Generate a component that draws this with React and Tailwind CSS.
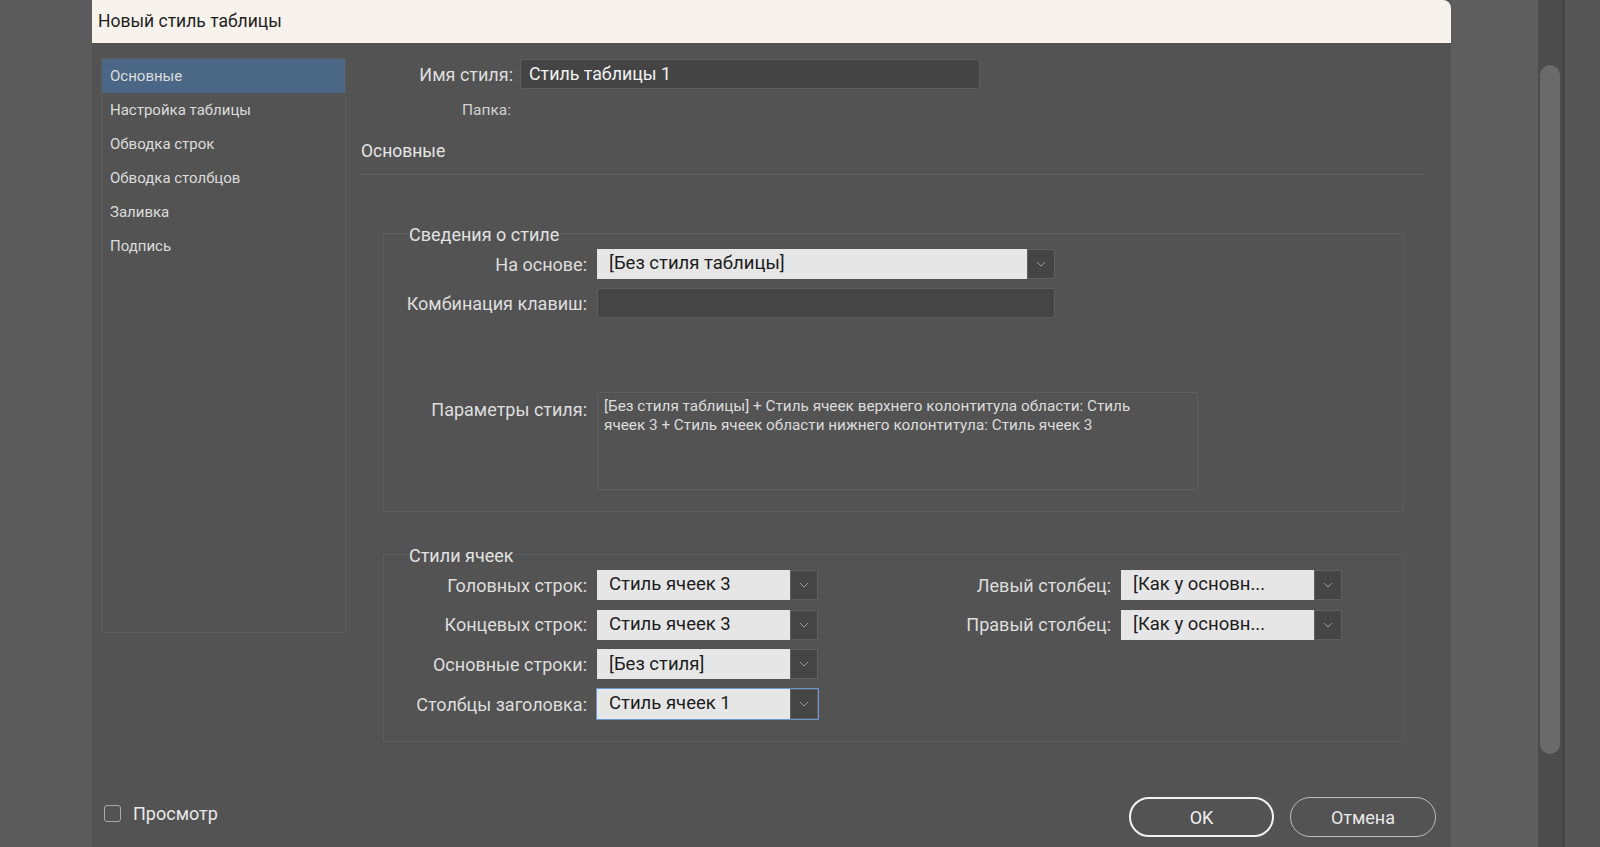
import React from "react";

const navItems = [
  "Основные",
  "Настройка таблицы",
  "Обводка строк",
  "Обводка столбцов",
  "Заливка",
  "Подпись",
];

const Chevron = () => (
  <svg width="10" height="6" viewBox="0 0 10 6" fill="none">
    <path d="M1 1l4 4 4-4" stroke="#9c9c9c" strokeWidth="1" />
  </svg>
);

// dropdown with a light value box and a dark arrow button
const Select = ({ value, className = "", focused = false }) => (
  <div
    className={`flex h-[30px] ${className} ${
      focused ? "outline outline-1 outline-[#6a98d4]" : ""
    }`}
  >
    <div className="flex-1 flex items-center pl-[12px] bg-[#e6e6e6] text-[#1c1c1c] text-[18.5px] whitespace-nowrap overflow-hidden">
      {value}
    </div>
    <div className="w-[28px] flex items-center justify-center bg-[#454545] border border-[#5f5f5f]">
      <Chevron />
    </div>
  </div>
);

const Label = ({ children, className = "" }) => (
  <div className={`text-right text-[18px] text-[#dedede] whitespace-nowrap ${className}`}>
    {children}
  </div>
);

const cellRows = [
  ["Головных строк:", "Стиль ячеек 3"],
  ["Концевых строк:", "Стиль ячеек 3"],
  ["Основные строки:", "[Без стиля]"],
  ["Столбцы заголовка:", "Стиль ячеек 1"],
];

export default function App() {
  return (
    <div className="w-[1600px] h-[847px] flex bg-[#5b5b5b] overflow-hidden font-['Roboto',sans-serif]">
      <div className="w-[92px] shrink-0" />

      {/* dialog */}
      <div className="w-[1359px] shrink-0 flex flex-col bg-[#535353]">
        <div className="h-[43px] shrink-0 flex items-center pl-[6px] bg-[#f8f2ec] rounded-tr-[8px] text-[17.5px] text-[#1e1e1e]">
          Новый стиль таблицы
        </div>

        <div className="flex pt-[15px]">
          {/* sections list */}
          <div className="ml-[9px] w-[245px] h-[575px] shrink-0 border border-[#5d5d5d]">
            {navItems.map((item, i) => (
              <div
                key={item}
                className={`h-[34px] flex items-center pl-[8px] text-[15px] text-[#dcdcdc] ${
                  i === 0 ? "bg-[#4a6886]" : ""
                }`}
              >
                {item}
              </div>
            ))}
          </div>

          {/* settings */}
          <div className="ml-[11px] flex-1 flex flex-col">
            <div className="flex items-center h-[30px] mt-[1px]">
              <Label className="w-[156px]">Имя стиля:</Label>
              <div className="ml-[7px] w-[460px] h-[30px] flex items-center pl-[8px] bg-[#444444] border border-[#5e5e5e] rounded-[3px] text-[17.8px] text-[#f2f2f2]">
                Стиль таблицы 1
              </div>
            </div>
            <div className="flex items-center h-[20px] mt-[12px]">
              <div className="w-[154px] text-right text-[15.5px] text-[#d2d2d2]">Папка:</div>
            </div>
            <div className="mt-[18px] pl-[4px] h-[24px] flex items-center text-[17.5px] text-[#e6e6e6]">
              Основные
            </div>
            <div className="mt-[11px] w-[1071px] h-px bg-[#5c5c5c]" />

            {/* style info group */}
            <div className="relative mt-[58px] ml-[26px] w-[1021px] h-[279px] border border-[#5c5c5c] pt-[15px]">
              <span className="absolute left-[24px] -top-[13px] px-[1px] bg-[#535353] text-[18px] text-[#e2e2e2]">
                Сведения о стиле
              </span>
              <div className="flex items-center">
                <Label className="w-[203px]">На основе:</Label>
                <Select value="[Без стиля таблицы]" className="ml-[10px] w-[458px]" />
              </div>
              <div className="flex items-center mt-[9px]">
                <Label className="w-[203px]">Комбинация клавиш:</Label>
                <div className="ml-[10px] w-[458px] h-[30px] bg-[#454545] border border-[#5e5e5e] rounded-[2px]" />
              </div>
              <div className="flex mt-[74px]">
                <Label className="w-[203px] pt-[4px]">Параметры стиля:</Label>
                <div className="ml-[10px] w-[601px] h-[98px] px-[6px] pt-[4px] border border-[#5e5e5e] text-[15.3px] leading-[19px] text-[#dcdcdc]">
                  [Без стиля таблицы] + Стиль ячеек верхнего колонтитула области: Стиль
                  <br />
                  ячеек 3 + Стиль ячеек области нижнего колонтитула: Стиль ячеек 3
                </div>
              </div>
            </div>

            {/* cell styles group */}
            <div className="relative mt-[42px] ml-[26px] w-[1021px] h-[188px] border border-[#5c5c5c] pt-[15px]">
              <span className="absolute left-[24px] -top-[13px] px-[1px] bg-[#535353] text-[18px] text-[#e2e2e2]">
                Стили ячеек
              </span>
              <div className="flex">
                <div className="flex flex-col gap-[9.7px]">
                  {cellRows.map(([label, value], i) => (
                    <div key={label} className="flex items-center">
                      <Label className="w-[203px]">{label}</Label>
                      <Select
                        value={value}
                        className="ml-[10px] w-[221px]"
                        focused={i === 3}
                      />
                    </div>
                  ))}
                </div>
                <div className="flex flex-col gap-[9.7px]">
                  <div className="flex items-center">
                    <Label className="w-[293px]">Левый столбец:</Label>
                    <Select value="[Как у основн..." className="ml-[10px] w-[221px]" />
                  </div>
                  <div className="flex items-center">
                    <Label className="w-[293px]">Правый столбец:</Label>
                    <Select value="[Как у основн..." className="ml-[10px] w-[221px]" />
                  </div>
                </div>
              </div>
            </div>
          </div>
        </div>

        {/* footer */}
        <div className="mt-[55px] flex items-center pl-[12px] pr-[15px]">
          <div className="w-[17px] h-[17px] -mt-[8px] rounded-[3px] border-[1.5px] border-[#a9a9a9]" />
          <span className="ml-[12px] -mt-[8px] text-[18px] text-[#e8e8e8]">Просмотр</span>
          <div className="ml-auto w-[145px] h-[40px] flex items-center justify-center rounded-full border-2 border-[#f2f2f2] text-[18px] text-[#f0f0f0]">
            OK
          </div>
          <div className="ml-[16px] w-[146px] h-[40px] flex items-center justify-center rounded-full border border-[#bdbdbd] text-[18px] text-[#e8e8e8]">
            Отмена
          </div>
        </div>
      </div>

      {/* scrollbar column */}
      <div className="w-[87px] shrink-0 bg-[#5e5e5e]" />
      <div className="w-[24px] shrink-0 bg-[#4c4c4c] pt-[65px] px-[2px]">
        <div className="h-[689px] rounded-full bg-[#6a6a6a]" />
      </div>
      <div className="w-[3px] shrink-0 bg-[#464646]" />
      <div className="flex-1 bg-[#555555]" />
    </div>
  );
}
